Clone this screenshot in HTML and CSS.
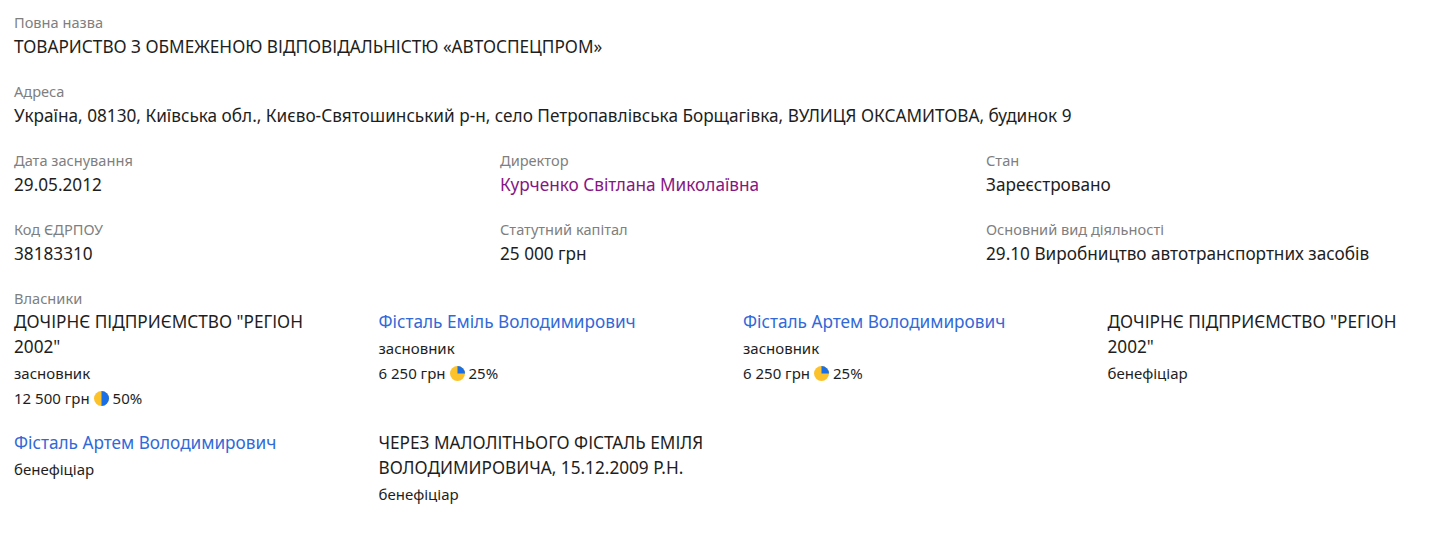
FILE: index.html
```html
<!DOCTYPE html>
<html lang="uk">
<head>
<meta charset="utf-8">
<link rel="stylesheet" href="styles.css">
</head>
<body>
<div class="page">
  <div class="field">
    <div class="label">Повна назва</div>
    <div class="value">ТОВАРИСТВО З ОБМЕЖЕНОЮ ВІДПОВІДАЛЬНІСТЮ «АВТОСПЕЦПРОМ»</div>
  </div>
  <div class="field">
    <div class="label">Адреса</div>
    <div class="value">Україна, 08130, Київська обл., Києво-Святошинський р-н, село Петропавлівська Борщагівка, ВУЛИЦЯ ОКСАМИТОВА, будинок 9</div>
  </div>
  <div class="grid3">
    <div class="field">
      <div class="label">Дата заснування</div>
      <div class="value">29.05.2012</div>
    </div>
    <div class="field">
      <div class="label">Директор</div>
      <div class="value"><a class="visited" href="#">Курченко Світлана Миколаївна</a></div>
    </div>
    <div class="field">
      <div class="label">Стан</div>
      <div class="value">Зареєстровано</div>
    </div>
    <div class="field">
      <div class="label">Код ЄДРПОУ</div>
      <div class="value">38183310</div>
    </div>
    <div class="field">
      <div class="label">Статутний капітал</div>
      <div class="value">25 000 грн</div>
    </div>
    <div class="field">
      <div class="label">Основний вид діяльності</div>
      <div class="value">29.10 Виробництво автотранспортних засобів</div>
    </div>
  </div>
  <div class="owners">
    <div class="label">Власники</div>
    <div class="grid4">
      <div class="owner">
        <div class="name">ДОЧІРНЄ ПІДПРИЄМСТВО "РЕГІОН 2002"</div>
        <div class="role">засновник</div>
        <div class="share">12 500 грн <svg class="pie" viewBox="0 0 14 14"><circle cx="7" cy="7" r="7" fill="#fcc22b"/><path d="M7 0 A7 7 0 0 1 7 14 Z" fill="#1a6fe6"/></svg> 50%</div>
      </div>
      <div class="owner">
        <div class="name"><a class="link" href="#">Фісталь Еміль Володимирович</a></div>
        <div class="role">засновник</div>
        <div class="share">6 250 грн <svg class="pie" viewBox="0 0 14 14"><circle cx="7" cy="7" r="7" fill="#fcc22b"/><path d="M7 7 L7 0 A7 7 0 0 1 14 7 Z" fill="#1a6fe6"/></svg> 25%</div>
      </div>
      <div class="owner">
        <div class="name"><a class="link" href="#">Фісталь Артем Володимирович</a></div>
        <div class="role">засновник</div>
        <div class="share">6 250 грн <svg class="pie" viewBox="0 0 14 14"><circle cx="7" cy="7" r="7" fill="#fcc22b"/><path d="M7 7 L7 0 A7 7 0 0 1 14 7 Z" fill="#1a6fe6"/></svg> 25%</div>
      </div>
      <div class="owner">
        <div class="name">ДОЧІРНЄ ПІДПРИЄМСТВО "РЕГІОН 2002"</div>
        <div class="role">бенефіціар</div>
      </div>
      <div class="owner">
        <div class="name"><a class="link" href="#">Фісталь Артем Володимирович</a></div>
        <div class="role">бенефіціар</div>
      </div>
      <div class="owner">
        <div class="name">ЧЕРЕЗ МАЛОЛІТНЬОГО ФІСТАЛЬ ЕМІЛЯ ВОЛОДИМИРОВИЧА, 15.12.2009 Р.Н.</div>
        <div class="role">бенефіціар</div>
      </div>
    </div>
  </div>
</div>
</body>
</html>
```

FILE: styles.css
```css
html, body {
  margin: 0;
  padding: 0;
  background: #ffffff;
}
body {
  font-family: "Noto Sans", "Open Sans", sans-serif;
  color: #1e1e1e;
}
.page {
  padding: 12px 0 0 14px;
}
.field {
  margin-bottom: 22px;
}
.label {
  font-size: 14.6px;
  line-height: 20px;
  color: #7f7f7f;
}
.value {
  font-size: 17.2px;
  line-height: 24px;
  margin-top: 3px;
  color: #1e1e1e;
}
.grid3 {
  display: grid;
  grid-template-columns: repeat(3, 456px);
  column-gap: 30px;
}
.grid4 {
  display: grid;
  grid-template-columns: repeat(4, 330px);
  column-gap: 34.5px;
  row-gap: 19px;
  margin-top: 1px;
}
.owner .name {
  font-size: 17.2px;
  line-height: 25px;
}
.owner .role {
  font-size: 15px;
  line-height: 25px;
  margin-top: 2px;
}
.owner .share {
  font-size: 15px;
  line-height: 25px;
  display: flex;
  align-items: center;
  gap: 4px;
}
.pie {
  width: 15px;
  height: 15px;
  display: block;
}
a {
  text-decoration: none;
}
.link {
  color: #3169d8;
}
.visited {
  color: #861683;
}
```
